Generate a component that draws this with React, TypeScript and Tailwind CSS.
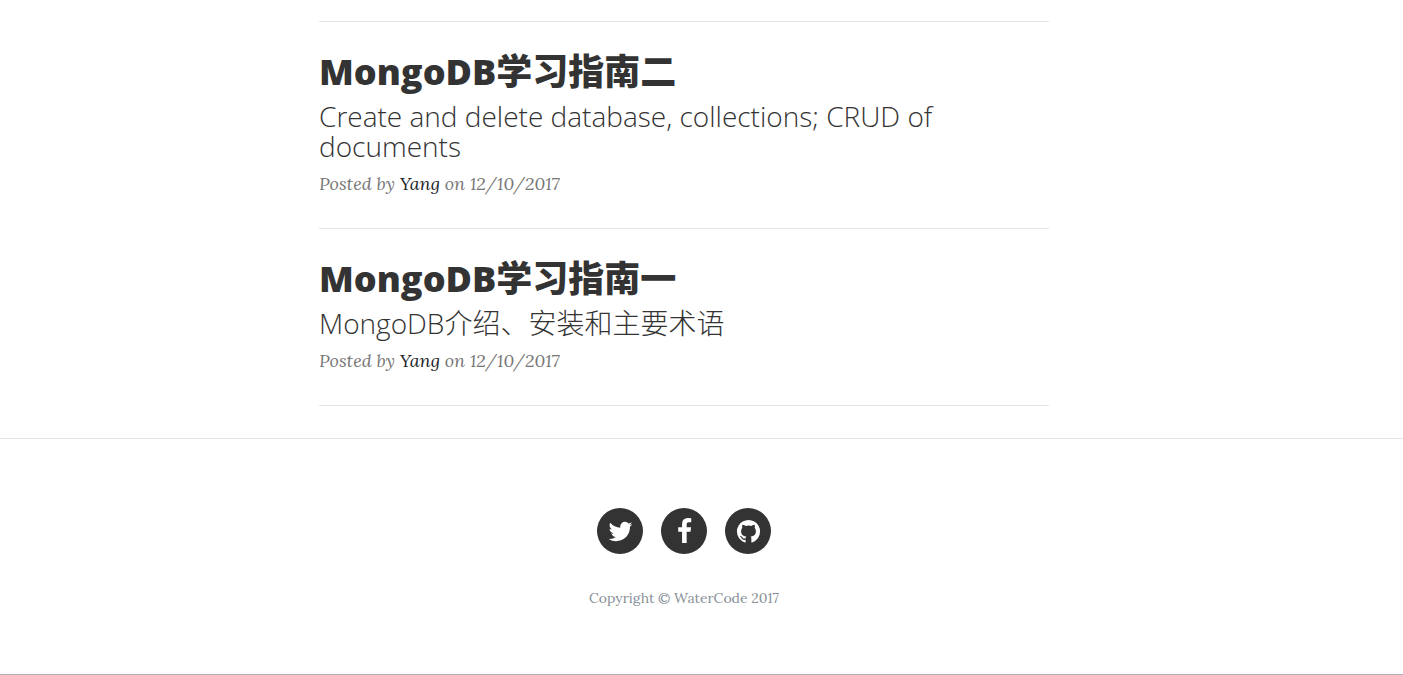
const posts = [
  {
    title: "MongoDB学习指南二",
    subtitle: "Create and delete database, collections; CRUD of documents",
  },
  { title: "MongoDB学习指南一", subtitle: "MongoDB介绍、安装和主要术语" },
];

const socials = [
  {
    label: "Twitter",
    path: "M1684 408q-67 98-162 167 1 14 1 42 0 130-38 259.5t-115.5 248.5-184.5 210.5-258 146-323 54.5q-271 0-496-145 35 4 78 4 225 0 401-138-105-2-188-64.5t-114-159.5q33 5 61 5 43 0 85-11-112-23-185.5-111.5t-73.5-205.5v-4q68 38 146 41-66-44-105-115t-39-154q0-88 44-163 121 149 294.5 238.5t371.5 99.5q-8-38-8-74 0-134 94.5-228.5t228.5-94.5q140 0 236 102 109-21 205-78-37 115-142 178 93-10 186-50z",
  },
  {
    label: "Facebook",
    path: "M1343 12v264h-157q-86 0-116 36t-30 108v189h293l-39 296h-254v759h-306v-759h-255v-296h255v-218q0-186 104-288.5t277-102.5q147 0 228 12z",
  },
  {
    label: "GitHub",
    path: "M896 128q209 0 385.5 103t279.5 279.5 103 385.5q0 251-146.5 451.5t-378.5 277.5q-27 5-40-7t-13-30q0-3 .5-76.5t.5-134.5q0-97-52-142 57-6 102.5-18t94-39 81-66.5 53-105 20.5-150.5q0-119-79-206 37-91-8-204-28-9-81 11t-92 44l-38 24q-93-26-192-26t-192 26q-16-11-42.5-27t-83.5-38.5-85-13.5q-45 113-8 204-79 87-79 206 0 85 20.5 150t52.5 105 80.5 67 94 39 102.5 18q-39 36-49 103-21 10-45 15t-57 5-65.5-21.5-55.5-62.5q-19-32-48.5-52t-49.5-24l-20-3q-21 0-29 4.5t-5 11.5 9 14 13 12l7 5q22 10 43.5 38t31.5 51l10 23q13 38 44 61.5t67 30 69.5 7 55.5-3.5l23-4q0 38 .5 88.5t.5 54.5q0 18-13 30t-40 7q-232-77-378.5-277.5t-146.5-451.5q0-209 103-385.5t279.5-279.5 385.5-103z",
  },
];

export default function App() {
  return (
    <div className="bg-white pt-[21px] font-['Lora','Liberation_Serif',serif] text-[#212529]">
      <main className="pr-[35px]">
        <div className="mx-auto max-w-[730px] border-t border-[#e5e5e5]">
          {posts.map((post) => (
            <article key={post.title} className="border-b border-[#e5e5e5] pt-8 pb-[31px]">
              <a
                href="#post"
                className="block font-['Open_Sans','Noto_Sans_CJK_SC',sans-serif] text-[#333]"
              >
                <h2 className="text-[36px] leading-[36px] font-extrabold">{post.title}</h2>
                <h3 className="mt-[11px] text-[28px] leading-[30px] font-light">
                  {post.subtitle}
                </h3>
              </a>
              <p className="mt-[9px] text-[18px] leading-[27px] text-[#777] italic">
                Posted by{" "}
                <a href="#author" className="text-[#212529]">
                  Yang
                </a>{" "}
                on 12/10/2017
              </p>
            </article>
          ))}
        </div>
      </main>
      <footer className="mt-8 border-t border-b border-t-[#e5e5e5] border-b-[#b2b2b2] pt-[69px] pr-[35px] pb-16">
        <ul className="flex justify-center gap-[18px]">
          {socials.map(({ label, path }) => (
            <li key={label}>
              <a
                href="#social"
                aria-label={label}
                className="flex size-[46px] items-center justify-center rounded-full bg-[#333] text-white"
              >
                <svg viewBox="0 0 1792 1792" className="size-[27px] fill-current" aria-hidden="true">
                  <path d={path} />
                </svg>
              </a>
            </li>
          ))}
        </ul>
        <p className="mt-8 text-center text-[14px] leading-[24px] text-[#868e96]">
          Copyright © WaterCode 2017
        </p>
      </footer>
    </div>
  );
}
